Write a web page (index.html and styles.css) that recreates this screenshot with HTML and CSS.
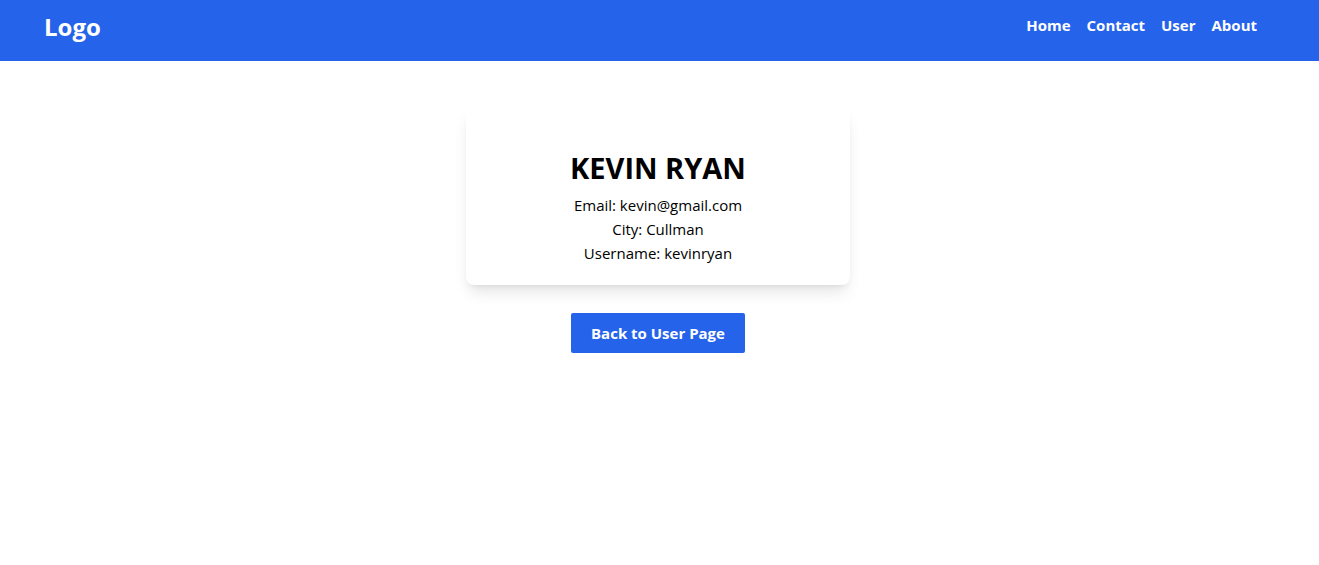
FILE: index.html
```html
<!DOCTYPE html>
<html lang="en">
<head>
<meta charset="utf-8">
<title>User</title>
<link rel="stylesheet" href="styles.css">
</head>
<body>
<header class="topbar">
  <a class="logo" href="#">Logo</a>
  <nav class="nav">
    <a href="#">Home</a>
    <a href="#">Contact</a>
    <a href="#">User</a>
    <a href="#">About</a>
  </nav>
</header>
<main class="main">
  <section class="card">
    <h1 class="name">KEVIN RYAN</h1>
    <p class="line">Email: kevin@gmail.com</p>
    <p class="line">City: Cullman</p>
    <p class="line">Username: kevinryan</p>
  </section>
  <a class="back" href="#">Back to User Page</a>
</main>
</body>
</html>
```
FILE: styles.css
```css
* { box-sizing: border-box; }
html, body { margin: 0; padding: 0; }
body {
  font-family: "Open Sans", "Noto Sans", sans-serif;
  color: #000;
  background: #fff;
}
a { text-decoration: none; color: inherit; }
.topbar {
  height: 61px;
  background: #2563eb;
  display: flex;
  align-items: center;
  justify-content: space-between;
  padding: 0 62px 0 44px;
  color: #fff;
}
.logo {
  font-size: 24px;
  font-weight: 700;
  margin-top: -8px;
}
.nav {
  display: flex;
  gap: 16px;
  font-size: 15px;
  font-weight: 700;
  margin-top: -12px;
}
.main {
  display: flex;
  flex-direction: column;
  align-items: center;
  padding-top: 46px;
  padding-right: 3px;
}
.card {
  width: 384px;
  background: #fff;
  border-radius: 8px;
  box-shadow: 0 10px 15px -3px rgba(0,0,0,0.1), 0 4px 6px -4px rgba(0,0,0,0.1);
  padding: 43px 24px 20px;
  text-align: center;
}
.name {
  margin: 0 0 7px;
  font-size: 29px;
  line-height: 36px;
  font-weight: 700;
}
.line {
  margin: 0;
  font-size: 15px;
  line-height: 24px;
}
.back {
  margin-top: 28px;
  background: #2563eb;
  color: #fff;
  font-size: 15px;
  font-weight: 700;
  height: 40px;
  width: 174px;
  display: flex;
  align-items: center;
  justify-content: center;
  border-radius: 2px;
}
```
